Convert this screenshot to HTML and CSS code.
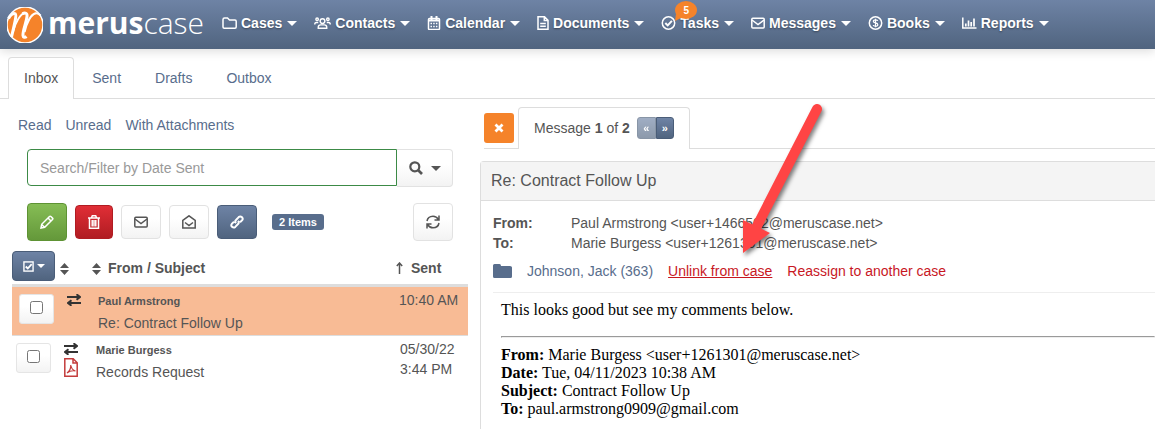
FILE: index.html
```html
<!DOCTYPE html>
<html lang="en">
<head>
<meta charset="utf-8">
<title>MerusCase - Messages</title>
<link rel="stylesheet" href="styles.css">
</head>
<body>
  <header class="navbar">
    <a href="#" class="brand" aria-label="meruscase">
      <svg class="brand-mark" viewBox="0 0 36 36">
        <circle cx="18" cy="18" r="18" fill="#f5832a"/>
        <path d="M1.500 11.500C3.500 7.500 6.500 6 8.300 6.800C9.800 8 8 15 4.500 30" fill="none" stroke="#fff" stroke-width="3"/>
        <path d="M6 25C8.500 15 13.500 6.500 18 6" fill="none" stroke="#fff" stroke-width="1.800"/>
        <path d="M15.500 6.800C18 5.200 20.500 6 20 9.500C19.500 15 15.500 24 16 28.500C16.200 30.500 18 30.800 19.500 29.500" fill="none" stroke="#fff" stroke-width="3"/>
        <path d="M17.500 25C19.500 16 24 7 28.500 6.300C31 6 32.500 7 33.500 8.500" fill="none" stroke="#fff" stroke-width="2.200"/>
      </svg>
      <span class="brand-name"><b>merus</b>case</span>
    </a>
    <nav class="menu">
      <a href="#"><svg class="w15" viewBox="0 0 15 14"><path d="M1 3.500Q1 2 2.500 2H5.500L7.500 4H13Q14.200 4 14.200 5.200V11Q14.200 12.200 13 12.200H2.200Q1 12.200 1 11Z"/></svg>Cases<i class="caret"></i></a>
      <a href="#"><svg class="w17" viewBox="0 0 18 14"><circle cx="9" cy="5" r="2.500"/><path d="M4.500 12.500V11.500Q4.500 9 7 9H11Q13.500 9 13.500 11.500V12.500Z"/><circle cx="3.300" cy="3" r="1.300"/><circle cx="14.700" cy="3" r="1.300"/><path d="M.8 8.500Q.8 6.500 2.500 6.500H4.500M17.200 8.500Q17.200 6.500 15.500 6.500H13.500"/></svg>Contacts<i class="caret"></i></a>
      <a href="#"><svg class="w14" viewBox="0 0 14 14"><rect x="1.500" y="2.500" width="11" height="11" rx="1"/><path d="M1.500 4.500H12.500M4.500 0V4M9.500 0V4" stroke-width="2"/><path d="M3.500 7.500H11M3.500 10.500H11" stroke-dasharray="1.500 1.200"/></svg>Calendar<i class="caret"></i></a>
      <a href="#"><svg class="w12" viewBox="0 0 12 14"><path d="M1 .8H7.500L11 4.300V13.200H1ZM7.300 1V4.500H11M3.200 7.500H8.800M3.200 10.300H8.800"/></svg>Documents<i class="caret"></i></a>
      <a href="#"><svg class="w15" viewBox="0 0 15 14"><circle cx="7.500" cy="7" r="6.200"/><path d="M4.300 7L6.700 9.400L10.900 4.900" stroke-width="2"/></svg>Tasks<i class="caret"></i><span class="bubble">5<svg viewBox="0 0 8 7"><path d="M1 0L0 7L8 3Z"/></svg></span></a>
      <a href="#"><svg class="w14" viewBox="0 0 14 14"><rect x=".8" y="2.300" width="12.400" height="9.600" rx="1"/><path d="M1 4L7 8.500L13 4"/></svg>Messages<i class="caret"></i></a>
      <a href="#"><svg class="w15" viewBox="0 0 15 14"><circle cx="7.500" cy="7" r="6.200"/><path d="M9.700 5Q9.500 3.800 7.500 3.800Q5.300 3.800 5.300 5.300Q5.300 6.500 7.500 6.900Q9.800 7.300 9.800 8.700Q9.800 10.200 7.500 10.200Q5.300 10.200 5.200 9M7.500 2.700V11.300" stroke-width="1.200"/></svg>Books<i class="caret"></i></a>
      <a href="#"><svg class="w15" viewBox="0 0 15 14"><path d="M.8 1.500V12H14.500"/><path d="M3.800 10.500V7.500M6.500 10.500V4.500M9.200 10.500V6M12 10.500V2.500" stroke-width="1.700"/></svg>Reports<i class="caret"></i></a>
    </nav>
  </header>

  <nav class="tabs">
    <a href="#" class="active">Inbox</a>
    <a href="#">Sent</a>
    <a href="#">Drafts</a>
    <a href="#">Outbox</a>
  </nav>

  <main class="columns">
    <section class="list">
      <div class="filters">
        <a href="#">Read</a>
        <a href="#">Unread</a>
        <a href="#">With Attachments</a>
      </div>

      <form class="search">
        <input type="text" placeholder="Search/Filter by Date Sent" aria-label="Search/Filter by Date Sent">
        <button type="button" class="btn" aria-label="Search"><svg class="icon" viewBox="0 0 14 14"><circle cx="5.800" cy="5.800" r="4.500" stroke-width="2.200"/><path d="M9 9L13 13" stroke-width="2.600"/></svg><i class="caret"></i></button>
      </form>

      <div class="toolbar">
        <button type="button" class="btn tall green" aria-label="Compose"><svg class="icon" viewBox="0 0 14 14"><path d="M1 13L1.700 9.300L9.500 1.500Q10.200 .8 10.900 1.500L12.500 3.100Q13.200 3.800 12.500 4.500L4.700 12.300ZM8 3L11 6M1.700 9.500L4.500 12.300"/></svg></button>
        <button type="button" class="btn narrow red" aria-label="Delete"><svg class="icon" viewBox="0 0 14 14"><path d="M2.500 3.500V13.200H11.500V3.500M1 3H13M4.500 2.800L5.300 .8H8.700L9.500 2.800M5.200 5V11.500M7 5V11.500M8.800 5V11.500"/></svg></button>
        <button type="button" class="btn" aria-label="Mark as unread"><svg class="icon" viewBox="0 0 14 14"><rect x=".8" y="2.300" width="12.400" height="9.600" rx="1"/><path d="M1 4L7 8.500L13 4"/></svg></button>
        <button type="button" class="btn" aria-label="Mark as read"><svg class="icon" viewBox="0 0 14 14"><path d="M.8 5.300L7 .8L13.200 5.300V13H.8ZM3 7.500L7 10.500L11 7.500"/></svg></button>
        <button type="button" class="btn blue" aria-label="Link to case"><svg class="icon" viewBox="0 0 14 14"><path d="M6 8.200Q4.500 6.500 6 5L8.700 2.100Q10.300 .7 12 2.200Q13.400 3.800 12 5.400L10 7.300M8 5.800Q9.500 7.500 8 9L5.300 11.900Q3.700 13.300 2 11.800Q.6 10.200 2 8.600L4 6.700" stroke-width="2"/></svg></button>
        <span class="badge">2 Items</span>
        <button type="button" class="btn tall refresh" aria-label="Refresh"><svg class="icon" viewBox="0 0 14 14"><path d="M1 6Q1.800 1.300 7 1.200Q10.500 1.200 12.500 4.500M13 .5V5H8.500M13 8Q12.200 12.700 7 12.800Q3.500 12.800 1.500 9.500M1 13.500V9H5.500"/></svg></button>
      </div>

      <table class="messages">
        <thead>
          <tr>
            <th class="col-check"><button type="button" class="btn blue" aria-label="Select"><svg class="icon" viewBox="0 0 12 12"><rect x="1" y="1" width="10" height="10"/><path d="M3 6L5.200 8.200L9.500 3.500" stroke-width="2"/></svg><i class="caret"></i></button></th>
            <th class="col-icon"><svg class="sort" viewBox="0 0 9 12"><path d="M4.500 0L9 5H0ZM4.500 12L9 7H0Z"/></svg></th>
            <th class="col-from"><svg class="sort" viewBox="0 0 9 12"><path d="M4.500 0L9 5H0ZM4.500 12L9 7H0Z"/></svg>From / Subject</th>
            <th class="col-sent"><svg class="arrow-up" viewBox="0 0 7 12"><path d="M3.500 12V1.500M.8 4L3.500 1L6.200 4"/></svg>Sent</th>
          </tr>
        </thead>
        <tbody>
          <tr class="selected">
            <td><label class="check"><input type="checkbox" aria-label="Select Paul Armstrong"></label></td>
            <td><svg class="icon" viewBox="0 0 14 12"><path d="M0 3H12M2 9H14M9.500 .3L13 3L9.500 5.700M4.500 6.300L1 9L4.500 11.700"/></svg></td>
            <td><b>Paul Armstrong</b>Re: Contract Follow Up</td>
            <td>10:40 AM</td>
          </tr>
          <tr>
            <td><label class="check"><input type="checkbox" aria-label="Select Marie Burgess"></label></td>
            <td><svg class="icon" viewBox="0 0 14 12"><path d="M0 3H12M2 9H14M9.500 .3L13 3L9.500 5.700M4.500 6.300L1 9L4.500 11.700"/></svg><svg class="pdf" viewBox="0 0 14 19"><path d="M.8 .8H9.200L13.200 4.800V18.200H.8ZM9 1V5H13"/><path d="M3 15Q7 12 6.800 7Q7.500 12 11.500 13Q7 12 3 15" stroke-width="1.200"/></svg></td>
            <td><b>Marie Burgess</b>Records Request</td>
            <td>05/30/22<br>3:44 PM</td>
          </tr>
        </tbody>
      </table>
    </section>

    <section class="reader">
      <div class="reader-bar">
        <button type="button" class="close" aria-label="Close"><svg viewBox="0 0 10 10"><path d="M1.500 1.500L8.500 8.500M8.500 1.500L1.500 8.500"/></svg></button>
        <div class="pager">
          <span>Message <b>1</b> of <b>2</b></span>
          <div class="pager-buttons">
            <button type="button" disabled>«</button><button type="button">»</button>
          </div>
        </div>
      </div>

      <article class="panel">
        <h1>Re: Contract Follow Up</h1>
        <div class="panel-body">
          <dl>
            <dt>From:</dt><dd>Paul Armstrong &lt;user+1466502@meruscase.net&gt;</dd>
            <dt>To:</dt><dd>Marie Burgess &lt;user+1261301@meruscase.net&gt;</dd>
          </dl>
          <div class="case">
            <svg viewBox="0 0 19 14"><path d="M0 1.500Q0 0 1.500 0H6.500Q8 0 8 2H17Q19 2 19 3.500V12.500Q19 14 17.500 14H1.500Q0 14 0 12.500Z"/></svg>
            <a href="#">Johnson, Jack (363)</a>
            <a href="#" class="danger unlink">Unlink from case</a>
            <a href="#" class="danger">Reassign to another case</a>
          </div>
          <div class="mail">
            <p>This looks good but see my comments below.</p>
            <hr>
            <p><b>From:</b> Marie Burgess &lt;user+1261301@meruscase.net&gt;<br>
            <b>Date:</b> Tue, 04/11/2023 10:38 AM<br>
            <b>Subject:</b> Contract Follow Up<br>
            <b>To:</b> paul.armstrong0909@gmail.com</p>
          </div>
        </div>
      </article>

      <!-- callout pointing at the unlink action -->
      <svg class="pointer" viewBox="0 0 90 160">
        <path d="M77 10L17 127" stroke="#ff4444" stroke-width="10" stroke-linecap="round"/>
        <path d="M3 121L30 134L3 154Z" fill="#ff4444"/>
      </svg>
    </section>
  </main>
</body>
</html>
```
FILE: styles.css
```css
* {
  box-sizing: border-box;
}

body {
  margin: 0;
  min-height: 100vh;
  display: flex;
  flex-direction: column;
  font-family: "Liberation Sans", Arial, sans-serif;
  font-size: 14px;
  line-height: 20px;
  color: #555;
  background: #fff;
}

a {
  color: #586d8c;
  text-decoration: none;
}

button,
input {
  font: inherit;
  color: inherit;
}

svg {
  flex: none;
  fill: none;
  stroke: currentColor;
  stroke-width: 1.5;
}

.caret {
  display: inline-block;
  border: 5px solid transparent;
  border-top-color: currentColor;
  border-bottom: 0;
}

/* top bar */
.navbar {
  display: flex;
  align-items: center;
  height: 49px;
  padding-left: 7px;
  background: linear-gradient(#6e83a5, #50647f);
  box-shadow: 0 2px 10px rgba(0, 0, 0, 0.15);
}

.brand {
  display: flex;
  align-items: center;
  gap: 5px;
  width: 215px;
  color: #fff;
}

.brand-mark {
  width: 36px;
  height: 36px;
}

.brand-name {
  font-family: "Open Sans", sans-serif;
  font-size: 30px;
  font-weight: 300;
  line-height: 40px;
  padding-bottom: 3px;
}

.brand-name b {
  font-weight: 700;
}

.menu {
  display: flex;
  gap: 17px;
  padding-bottom: 3px;
}

.menu a {
  position: relative;
  display: flex;
  align-items: center;
  color: #fff;
  font-weight: bold;
  text-shadow: 0 1px 2px rgba(0, 0, 0, 0.4);
}

.menu svg {
  height: 14px;
  margin-right: 4px;
}

.menu .caret {
  margin-left: 5px;
}

.w12 { width: 12px; }
.w14 { width: 14px; }
.w15 { width: 15px; }
.w17 { width: 17px; }

.menu .bubble {
  position: absolute;
  left: 14px;
  top: -12px;
  width: 22px;
  height: 18px;
  border-radius: 50%;
  background: #f5832a;
  font-size: 10px;
  line-height: 19px;
  text-align: center;
  text-shadow: none;
}

.bubble svg {
  position: absolute;
  left: 0;
  bottom: -2px;
  width: 8px;
  height: 7px;
  fill: #f5832a;
  stroke: none;
}

/* folder tabs */
.tabs {
  display: flex;
  gap: 2px;
  padding: 8px 8px 0;
  border-bottom: 1px solid #ddd;
}

.tabs a {
  padding: 10px 15px 11px;
  border: 1px solid transparent;
  border-bottom: 0;
  border-radius: 4px 4px 0 0;
  margin-bottom: -1px;
}

.tabs .active {
  color: #555;
  border-color: #ddd;
  background: #fff;
}

.columns {
  flex: 1;
  display: flex;
  gap: 12px;
}

/* message list */
.list {
  width: 468px;
  padding: 16px 0 0 12px;
}

.filters {
  display: flex;
  gap: 14px;
  padding-left: 6px;
}

.search {
  display: flex;
  margin: 14px 15px 0;
}

.search input {
  flex: 1;
  min-width: 0;
  height: 37px;
  padding: 0 12px;
  border: 1px solid #3c8a46;
  border-radius: 4px 0 0 4px;
}

.search input::placeholder {
  color: #999;
}

.btn {
  display: flex;
  align-items: center;
  justify-content: center;
  gap: 8px;
  width: 40px;
  height: 34px;
  padding: 0;
  border: 1px solid #e2e2e2;
  border-radius: 4px;
  background: linear-gradient(#fff 40%, #f3f3f3);
}

.search .btn {
  width: 56px;
  height: 38px;
  border-left: 0;
  border-radius: 0 4px 4px 0;
}

.icon {
  width: 14px;
  height: 14px;
}

.toolbar {
  display: flex;
  align-items: center;
  gap: 8px;
  margin: 16px 15px 0;
}

.tall {
  height: 38px;
}

.narrow {
  width: 38px;
}

.green {
  color: #fff;
  border-color: #5e9334;
  background: linear-gradient(#86bd55, #64983a);
}

.red {
  color: #fff;
  border-color: #b01c22;
  background: linear-gradient(#e02e36, #b01c22);
}

.blue {
  color: #fff;
  border-color: #4a5d78;
  background: linear-gradient(#6e83a5, #50647f);
}

.badge {
  margin-left: 7px;
  padding: 0 7px;
  border-radius: 3px;
  background: #586d8c;
  color: #fff;
  font-size: 11px;
  font-weight: bold;
  line-height: 16px;
}

.refresh {
  margin-left: auto;
}

.messages {
  width: 100%;
  margin-top: 8px;
  table-layout: fixed;
  border-collapse: collapse;
}

.messages th {
  height: 35px;
  padding: 2px 0 0;
  text-align: left;
  border-bottom: 3px solid #ddd;
}

.messages th .btn {
  width: 43px;
  height: 30px;
  gap: 3px;
  margin-bottom: 3px;
}

.messages th .btn .icon {
  width: 11px;
  height: 11px;
}

.messages th .caret {
  border-width: 4px 4px 0;
}

.col-check { width: 48px; }
.col-icon { width: 32px; }
.col-sent { width: 84px; }

.sort {
  width: 9px;
  height: 12px;
  margin-right: 7px;
  vertical-align: -2px;
  fill: currentColor;
  stroke: none;
}

.arrow-up {
  width: 7px;
  height: 12px;
  margin: 0 8px 0 12px;
  vertical-align: -1px;
}

.messages td {
  height: 50px;
  padding: 3px 0 0 4px;
  vertical-align: top;
  border-bottom: 1px solid #ddd;
}

.messages tr:last-child td {
  border-bottom: 0;
}

.selected td {
  padding-left: 7px;
  background: #f8bb95;
}

.selected td:nth-child(3) {
  padding-left: 6px;
}

.messages td:last-child {
  padding-left: 16px;
}

.selected td:last-child {
  padding-left: 15px;
}

.messages td b {
  display: block;
  font-size: 11px;
}

.messages td:nth-child(3) {
  line-height: 22px;
}

.check {
  display: flex;
  align-items: center;
  justify-content: center;
  width: 35px;
  height: 30px;
  margin-top: 4px;
  padding-bottom: 4px;
  border: 1px solid #e5e5e5;
  border-radius: 3px;
  background: linear-gradient(#fff 40%, #f3f3f3);
}

.check input {
  width: 13px;
  height: 13px;
  margin: 0;
}

.messages td .icon {
  display: block;
  height: 12px;
  margin-top: 4px;
  color: #333;
  stroke-width: 2;
}

.pdf {
  display: block;
  width: 14px;
  height: 19px;
  margin-top: 3px;
  color: #c43c3c;
}

/* open message */
.reader {
  position: relative;
  flex: 1;
  display: flex;
  flex-direction: column;
  padding-top: 8px;
}

.reader-bar {
  display: flex;
  align-items: center;
  gap: 4px;
  height: 42px;
  margin-left: 4px;
  border-bottom: 1px solid #ddd;
}

.close {
  display: flex;
  align-items: center;
  justify-content: center;
  width: 30px;
  height: 30px;
  padding: 0;
  border: 0;
  border-radius: 3px;
  background: #f5832a;
  color: #fff;
}

.close svg {
  width: 10px;
  height: 10px;
  stroke-width: 2.8;
}

.pager {
  display: flex;
  align-items: center;
  gap: 7px;
  height: 42px;
  padding: 0 15px;
  border: 1px solid #ddd;
  border-bottom: 0;
  border-radius: 4px 4px 0 0;
  background: #fff;
}

.pager-buttons {
  display: flex;
}

.pager-buttons button {
  width: 18px;
  height: 22px;
  padding: 0;
  border: 1px solid #4a5d78;
  border-radius: 0 3px 3px 0;
  background: linear-gradient(#6e83a5, #50647f);
  color: #fff;
  font-size: 11px;
  font-weight: bold;
  line-height: 16px;
}

.pager-buttons button:disabled {
  width: 19px;
  border-radius: 3px 0 0 3px;
  opacity: 0.65;
}

.panel {
  flex: 1;
  margin-top: 12px;
  border: 1px solid #ddd;
  border-width: 1px 0 0 1px;
  border-radius: 4px 0 0 0;
}

.panel h1 {
  margin: 0;
  padding: 9px 10px;
  border-bottom: 1px solid #ddd;
  background: #f4f4f4;
  font-size: 16px;
  font-weight: normal;
}

.panel-body {
  padding: 12px 0 0 12px;
}

.panel dl {
  display: grid;
  grid-template-columns: 78px 1fr;
  margin: 0;
}

.panel dt {
  font-weight: bold;
}

.panel dd {
  margin: 0;
}

.case {
  display: flex;
  align-items: center;
  gap: 15px;
  padding: 8px 0 11px;
  border-bottom: 1px solid #eee;
}

.case svg {
  width: 19px;
  height: 14px;
  fill: #586d8c;
  stroke: none;
}

.danger {
  color: #c8171f;
}

.unlink {
  text-decoration: underline;
}

.mail {
  padding: 8px 0 0 8px;
  color: #000;
  font-family: "Liberation Serif", "Times New Roman", serif;
  font-size: 16px;
  line-height: 18px;
}

.mail p {
  margin: 0;
}

.mail hr {
  margin: 17px 0 8px;
}

.pointer {
  position: absolute;
  left: 260px;
  top: 0;
  width: 90px;
  height: 160px;
  stroke: none;
  pointer-events: none;
  filter: drop-shadow(2px 3px 2px rgba(0, 0, 0, 0.5));
}
```
